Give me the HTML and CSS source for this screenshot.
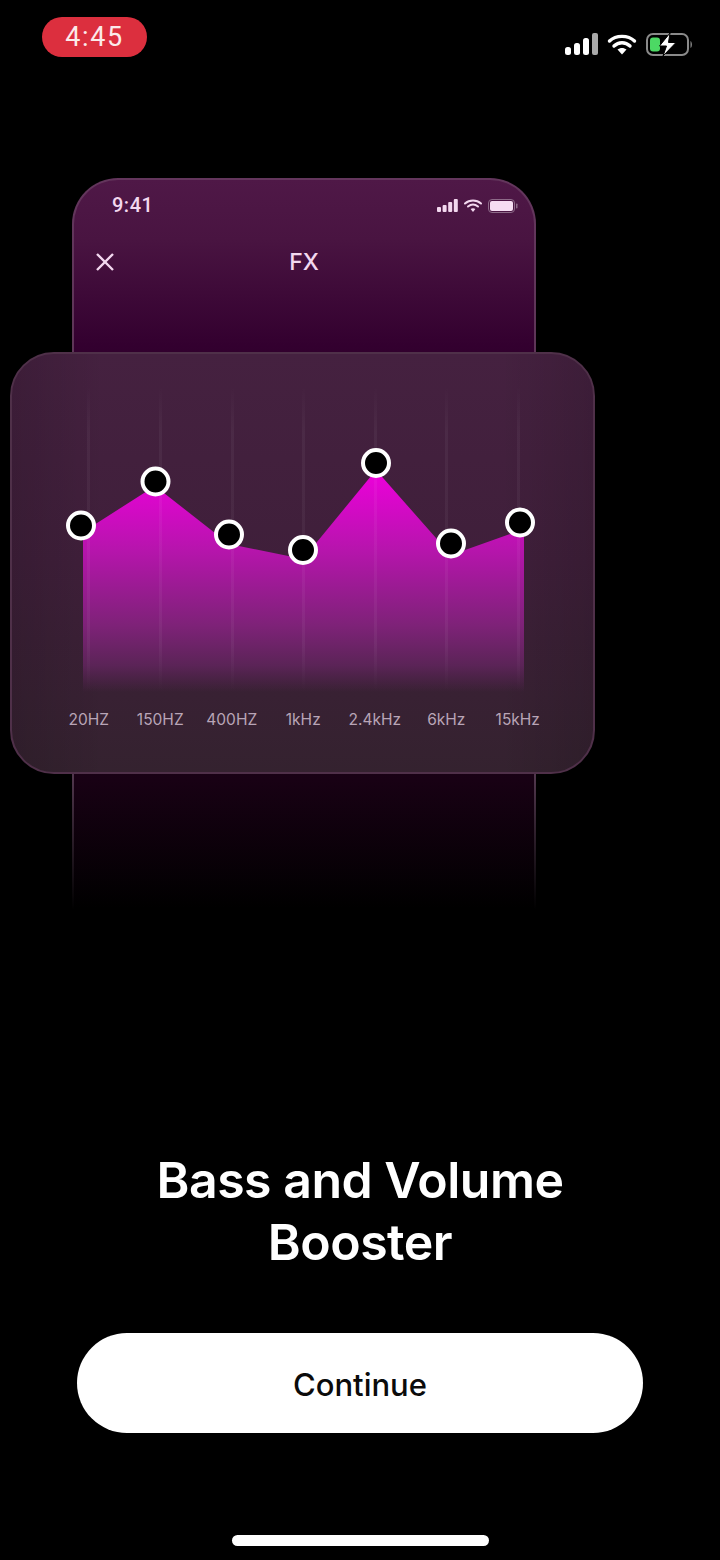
FILE: index.html
```html
<!DOCTYPE html>
<html lang="en">

<head>
    <meta charset="UTF-8">
    <meta name="viewport" content="width=device-width, initial-scale=1.0">
    <title>Bass and Volume Booster</title>
    <link rel="stylesheet" href="styles.css">
</head>

<body>
    <div class="status-bar">
        <div class="time-pill">4:45</div>
        <div class="status-icons">
            <svg width="33" height="22" viewBox="0 0 33 22">
                <rect x="0" y="14" width="6" height="8" rx="2.5" fill="#fff" />
                <rect x="9" y="10" width="6" height="12" rx="2.5" fill="#fff" />
                <rect x="18" y="5" width="6" height="17" rx="2.5" fill="#fff" />
                <rect x="27" y="0" width="6" height="22" rx="2" fill="#a9a9a9" />
            </svg>
            <svg width="30" height="22" viewBox="0 0 30 22">
                <path d="M2.5 8 C9 1.8 21 1.8 27.5 8" fill="none" stroke="#fff" stroke-width="3.4" stroke-linecap="round" />
                <path d="M7 13 C11.5 8.6 18.5 8.6 23 13" fill="none" stroke="#fff" stroke-width="3.4" stroke-linecap="round" />
                <path d="M10.5 16.6 C13 14.4 17 14.4 19.5 16.6 L15 21.5 Z" fill="#fff" />
            </svg>
            <svg width="47" height="23" viewBox="0 0 47 23">
                <rect x="1" y="1" width="41" height="21" rx="6" fill="none" stroke="#8a8a8a" stroke-width="2" />
                <rect x="4" y="4.5" width="10" height="14" rx="3" fill="#4cd964" />
                <path d="M44.5 8 C46.4 9 46.4 14 44.5 15 Z" fill="#8a8a8a" />
                <path d="M24 0 L13.5 13 H20.5 L17 23 L30 9.5 H22.5 Z" fill="#fff" stroke="#000" stroke-width="1" />
            </svg>
        </div>
    </div>

    <div class="hero">
        <div class="phone">
            <div class="phone-screen">
                <div class="phone-status">
                    <span class="phone-time">9:41</span>
                    <div class="phone-icons">
                        <svg width="21" height="13" viewBox="0 0 21 13">
                            <rect x="0" y="8" width="4" height="5" rx="1" fill="#f3d8ef" />
                            <rect x="5.6" y="6" width="4" height="7" rx="1" fill="#f3d8ef" />
                            <rect x="11.2" y="3" width="4" height="10" rx="1" fill="#f3d8ef" />
                            <rect x="16.8" y="0" width="4" height="13" rx="1" fill="#f3d8ef" />
                        </svg>
                        <svg width="18" height="13" viewBox="0 0 18 13">
                            <path d="M1 4.5 C5.5 .5 12.5 .5 17 4.5" fill="none" stroke="#f3d8ef" stroke-width="2" stroke-linecap="round" />
                            <path d="M4 7.5 C7 5 11 5 14 7.5" fill="none" stroke="#f3d8ef" stroke-width="2" stroke-linecap="round" />
                            <path d="M6.6 10 C8 9 10 9 11.4 10 L9 13 Z" fill="#f3d8ef" />
                        </svg>
                        <svg width="30" height="14" viewBox="0 0 30 14">
                            <rect x=".5" y=".5" width="26" height="13" rx="3.5" fill="none" stroke="#8d6a88" />
                            <rect x="2" y="2" width="23" height="10" rx="2" fill="#f6dcf2" />
                            <rect x="28" y="4.5" width="1.5" height="5" rx=".7" fill="#8d6a88" />
                        </svg>
                    </div>
                </div>
                <div class="phone-nav">
                    <svg class="close-icon" width="20" height="20" viewBox="0 0 20 20">
                        <path d="M2 2 L18 18 M18 2 L2 18" fill="none" stroke="#f3d8ef" stroke-width="2.4" />
                    </svg>
                    <span class="phone-title">FX</span>
                </div>
            </div>
        </div>

        <div class="eq-card">
            <!-- viewBox uses the page coordinates of the screenshot -->
            <svg class="eq-chart" width="581" height="340" viewBox="12 354 581 340">
                <defs>
                    <linearGradient id="areaFill" gradientUnits="userSpaceOnUse" x1="0" y1="470" x2="0" y2="692">
                        <stop offset="0" stop-color="#ee00dc" />
                        <stop offset=".35" stop-color="#b814ae" />
                        <stop offset=".7" stop-color="#7e2278" />
                        <stop offset=".88" stop-color="#5b2457" />
                        <stop offset="1" stop-color="#5a2456" stop-opacity="0" />
                    </linearGradient>
                    <linearGradient id="lineFill" gradientUnits="userSpaceOnUse" x1="0" y1="386" x2="0" y2="692">
                        <stop offset="0" stop-color="#fff" stop-opacity="0" />
                        <stop offset=".15" stop-color="#fff" stop-opacity=".045" />
                        <stop offset=".85" stop-color="#fff" stop-opacity=".045" />
                        <stop offset="1" stop-color="#fff" stop-opacity="0" />
                    </linearGradient>
                </defs>
                <polygon points="83,692 83,532 155,486 229,544 303,559 376,470 451,555 524,529 524,692" fill="url(#areaFill)" />
                <g fill="url(#lineFill)">
                    <rect x="87" y="386" width="3" height="306" />
                    <rect x="159" y="386" width="3" height="306" />
                    <rect x="231" y="386" width="3" height="306" />
                    <rect x="302" y="386" width="3" height="306" />
                    <rect x="374" y="386" width="3" height="306" />
                    <rect x="445" y="386" width="3" height="306" />
                    <rect x="517" y="386" width="3" height="306" />
                </g>
                <g fill="#000" stroke="#fff" stroke-width="4">
                    <circle cx="81" cy="525.5" r="13" />
                    <circle cx="155.5" cy="481.5" r="13" />
                    <circle cx="229" cy="534.5" r="13" />
                    <circle cx="303" cy="550" r="13" />
                    <circle cx="376" cy="463" r="13" />
                    <circle cx="451" cy="543.5" r="13" />
                    <circle cx="520" cy="522.5" r="13" />
                </g>
            </svg>
            <div class="eq-labels">
                <span>20HZ</span>
                <span>150HZ</span>
                <span>400HZ</span>
                <span>1kHz</span>
                <span>2.4kHz</span>
                <span>6kHz</span>
                <span>15kHz</span>
            </div>
        </div>
    </div>

    <h1 class="title">Bass and Volume<br>Booster</h1>
    <a class="continue-button">Continue</a>
    <div class="home-indicator"></div>
</body>

</html>
```

FILE: styles.css
```css
* {
    box-sizing: border-box;
}

html,
body {
    margin: 0;
    padding: 0;
    background: #000;
}

body {
    width: 720px;
    height: 1560px;
    overflow: hidden;
    display: flex;
    flex-direction: column;
    font-family: Inter, "Liberation Sans", sans-serif;
    color: #fff;
}

/* top status bar */
.status-bar {
    height: 178px;
    padding: 17px 27px 0 42px;
    display: flex;
    justify-content: space-between;
    align-items: flex-start;
}

.time-pill {
    width: 105px;
    height: 40px;
    border-radius: 20px;
    background: #dc2f3e;
    color: #fbeaea;
    font-family: Roboto, sans-serif;
    font-size: 27px;
    letter-spacing: 1.6px;
    line-height: 41px;
    text-align: center;
}

.status-icons {
    margin-top: 16px;
    display: flex;
    align-items: flex-start;
    gap: 9px;
}

/* phone mockup behind the card */
.hero {
    position: relative;
    height: 732px;
    padding-left: 72px;
}

.phone {
    width: 464px;
    height: 732px;
    padding: 2px 2px 0;
    border-radius: 46px 46px 0 0;
    background: linear-gradient(180deg, #63355c 0, #5a3554 300px, #50364c 600px, #000 732px);
}

.phone-screen {
    height: 100%;
    border-radius: 44px 44px 0 0;
    background: linear-gradient(180deg, #4f1847 0, #491441 60px, #33002f 165px, #2c0028 210px, #180114 600px, #000 728px);
}

.phone-status {
    height: 52px;
    padding: 15px 16px 0 38px;
    display: flex;
    justify-content: space-between;
    align-items: flex-start;
    color: #f3d8ef;
}

.phone-time {
    font-family: Roboto, sans-serif;
    font-size: 20px;
    font-weight: 500;
    line-height: 20px;
    letter-spacing: .5px;
}

.phone-icons {
    margin-top: 4px;
    display: flex;
    gap: 6px;
}

.phone-nav {
    position: relative;
    height: 60px;
    display: flex;
    justify-content: center;
    align-items: center;
    color: #f3d8ef;
}

.close-icon {
    position: absolute;
    left: 21px;
    top: 20px;
}

.phone-title {
    font-size: 23px;
    font-weight: 500;
    line-height: 60px;
}

/* equalizer card */
.eq-card {
    position: absolute;
    left: 10px;
    top: 174px;
    width: 585px;
    height: 422px;
    border: 2px solid #4f3049;
    border-radius: 44px;
    background:
        linear-gradient(90deg, rgba(0, 0, 0, .12), transparent 16%, transparent 84%, rgba(0, 0, 0, .12)),
        linear-gradient(180deg, #452140 0, #3f1f3a 50%, #34222f 100%);
}

.eq-chart {
    display: block;
}

.eq-labels {
    margin-top: 13px;
    padding-left: 41px;
    display: grid;
    grid-template-columns: repeat(7, 71.5px);
    color: #b9a5b7;
    font-size: 15.5px;
    line-height: 26px;
    text-align: center;
}

/* bottom block */
.title {
    margin: 239px 0 0;
    font-size: 50px;
    font-weight: 600;
    line-height: 62px;
    letter-spacing: -.5px;
    text-align: center;
}

.continue-button {
    margin: 60px 0 0 77px;
    width: 566px;
    height: 100px;
    border-radius: 50px;
    background: #fff;
    color: #0b0b0b;
    font-size: 31px;
    font-weight: 500;
    line-height: 104px;
    text-align: center;
}

.home-indicator {
    margin: 102px 0 0 232px;
    width: 257px;
    height: 11px;
    border-radius: 6px;
    background: #fff;
}
```
